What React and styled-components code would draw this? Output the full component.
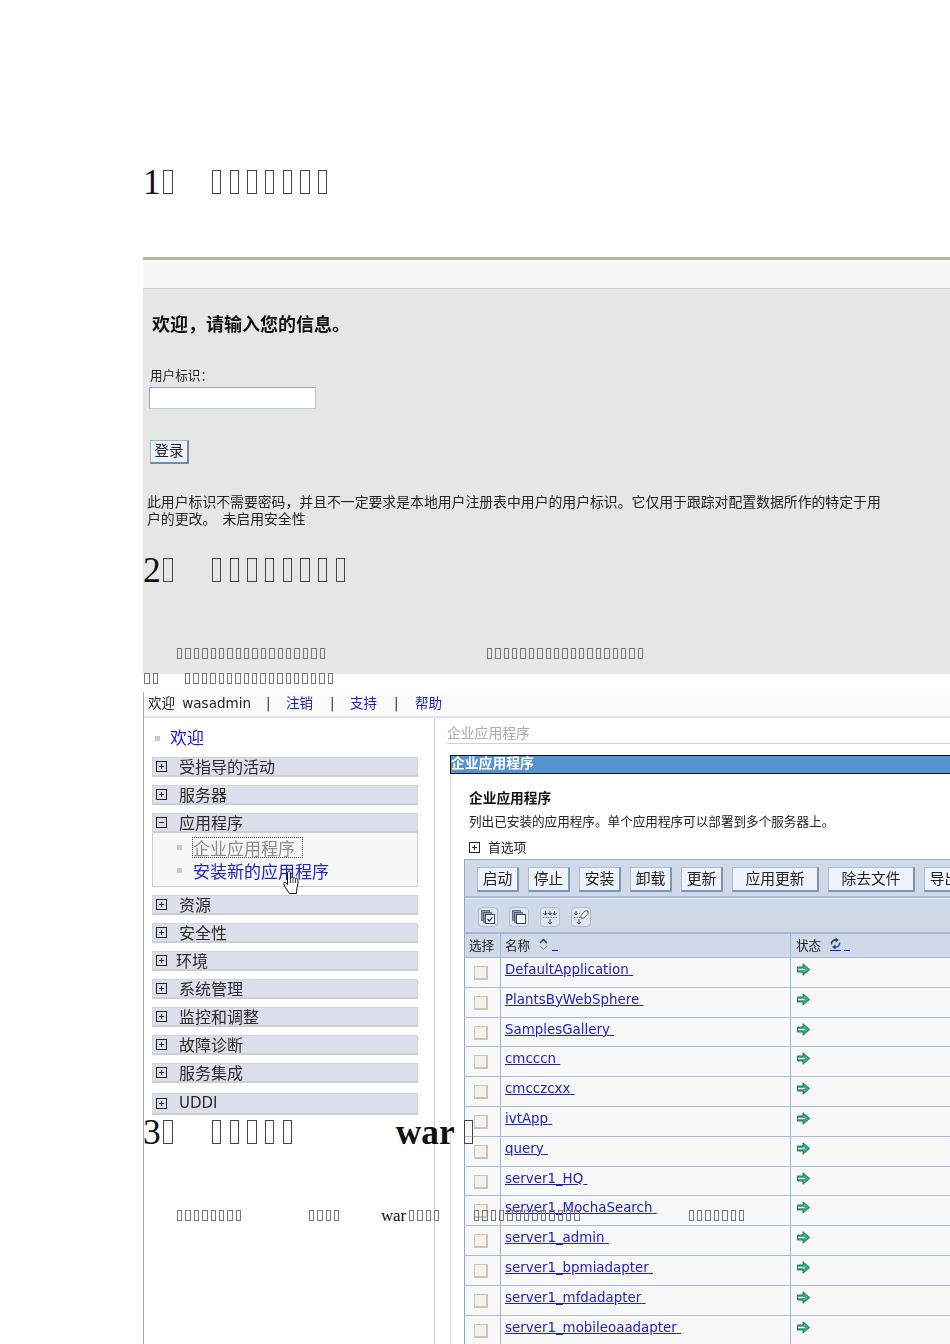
import React from 'react';
import styled, { createGlobalStyle } from 'styled-components';

const ui = `"DejaVu Sans", "Noto Sans CJK SC", sans-serif`;
const cjk = `"Noto Sans CJK SC", "Liberation Sans", sans-serif`;

const GlobalStyle = createGlobalStyle`
  html, body {
    margin: 0;
    padding: 0;
    background: #fff;
    overflow: hidden;
  }
`;

const Page = styled.div`
  position: relative;
  width: 950px;
  height: 1344px;
  overflow: hidden;
  padding: 162px 0 0 143px;
  box-sizing: border-box;
  font-family: "Liberation Serif", "Noto Sans CJK SC", serif;
  color: #111;
`;

/* missing glyph boxes, the document text has no font in the original */
const Box = styled.span`
  display: inline-block;
  box-sizing: border-box;
  width: ${p => (p.$big ? 0.27 : 0.32)}em;
  height: 0.68em;
  margin: 0 ${p => (p.$big ? 0.16 : 0.11)}em 0 0.07em;
  border: 1px solid ${p => (p.$big ? '#444' : '#777')};
`;

const Tofu = ({ n, big }) => (
  <>
    {Array.from({ length: n }, (_, i) => <Box key={i} $big={big} />)}
  </>
);

const Heading = styled.div`
  font-size: 35.4px;
  line-height: 40px;
  height: 40px;
  white-space: nowrap;
  margin-bottom: 55px;
`;

const FloatHeading = styled(Heading)`
  position: absolute;
  left: 143px;
  top: ${p => p.$top}px;
  margin: 0;
  z-index: 2;
`;

const Para = styled.div`
  position: absolute;
  left: 143px;
  top: ${p => p.$top}px;
  font-size: 16.8px;
  line-height: 20px;
  white-space: nowrap;
  z-index: 2;
`;

const Run = styled.span`
  margin-left: ${p => p.$gap}px;
`;

const War = styled.span`
  font-weight: ${p => (p.$bold ? 700 : 400)};
`;

/* login screenshot */
const LoginPanel = styled.section`
  height: 417px;
  box-sizing: border-box;
  border-top: 3px solid #b9b1a2;
  background: #e6e6e6;
  font-family: ${cjk};
  filter: blur(0.3px);
`;

const LoginBand = styled.div`
  height: 28px;
  background: #f7f7f7;
  border-bottom: 1px solid #cfcfcf;
`;

const LoginBody = styled.div`
  padding: 22px 0 0 7px;
  display: flex;
  flex-direction: column;
  align-items: flex-start;
`;

const Welcome = styled.h2`
  margin: 0 0 0 2px;
  font-size: 18px;
  line-height: 24px;
  font-weight: 700;
  color: #111;
`;

const FieldLabel = styled.label`
  margin-top: 31px;
  font-size: 12.6px;
  line-height: 18px;
  color: #222;
`;

const Input = styled.div`
  width: 167px;
  height: 22px;
  box-sizing: border-box;
  margin-top: 3px;
  margin-left: -1px;
  background: #fff;
  border: 1px solid #8aa7c6;
  border-bottom-color: #b8cade;
  border-right-color: #b8cade;
`;

const LoginButton = styled.div`
  width: 39px;
  height: 24px;
  box-sizing: border-box;
  margin-top: 31px;
  background: #eef3fb;
  border: 1px solid #9db3cc;
  border-right: 2px solid #6f8cae;
  border-bottom: 2px solid #6f8cae;
  font-size: 14.5px;
  line-height: 18px;
  text-align: center;
  color: #222;
`;

const Notice = styled.p`
  margin: 29px 0 0 -3px;
  width: 745px;
  font-size: 13.85px;
  line-height: 16.5px;
  color: #222;
`;

/* admin console screenshot */
const AdminPanel = styled.section`
  margin-top: 18px;
  height: 652px;
  border-left: 1px solid #b0aa9e;
  font-family: ${ui};
  filter: blur(0.3px);
`;

const TopBar = styled.div`
  height: 24px;
  box-sizing: content-box;
  background: #fbfbfb;
  border-bottom: 2px solid #e2e2e2;
  display: flex;
  align-items: flex-start;
  padding-left: 4px;
  font-size: 13.5px;
  line-height: 22px;
  color: #222;
  white-space: nowrap;
`;

const TopText = styled.span`
  margin-right: 15px;
  word-spacing: 3px;
`;

const TopLink = styled.a`
  color: #1a1ad0;
  width: 27px;
`;

const Divider = styled.span`
  width: ${p => p.$width || 20}px;
  margin-left: ${p => p.$left || 0}px;
  color: #333;
`;

const Columns = styled.div`
  display: grid;
  grid-template-columns: 291px 1fr;
  height: 626px;
`;

const Nav = styled.nav`
  border-right: 1px solid #cfcfcf;
  padding: 9px 16px 0 8px;
  display: flex;
  flex-direction: column;
  gap: 8px;
`;

const NavTop = styled.div`
  display: flex;
  align-items: flex-start;
  height: 22px;
  margin-left: 3px;
  font-size: 17px;
  line-height: 19px;
  color: #1a1ad0;
  font-family: ${cjk};
`;

const Bullet = styled.i`
  display: block;
  flex: none;
  width: 5px;
  height: 5px;
  background: #c8c8c8;
  margin-right: ${p => p.$gap}px;
  align-self: center;
`;

const TreeGroup = styled.div`
  display: flex;
  flex-direction: column;
`;

const TreeBar = styled.div`
  height: ${p => (p.$tall ? 22 : 20)}px;
  margin-top: ${p => (p.$tall ? 2 : 0)}px;
  box-sizing: border-box;
  background: #dcdfec;
  border: 1px solid #d2d2d6;
  border-bottom: 2px solid #cfcfcf;
  display: flex;
  align-items: center;
  padding: 0 0 1px 3px;
  font-size: 16px;
  line-height: 16px;
  font-family: ${cjk};
  color: #2a2a2a;
  white-space: nowrap;

  svg {
    flex: none;
    margin-right: ${p => p.$gap || 12}px;
  }
`;

const TreeLatin = styled.span`
  font-family: ${ui};
  font-size: 15px;
`;

const TreeBody = styled.div`
  height: 54px;
  box-sizing: border-box;
  background: #f7f7f7;
  border: 1px solid #cccccc;
  border-top: 0;
  padding: 4px 0 0 24px;
  font-family: ${cjk};
  font-size: 17px;
`;

const SubItem = styled.div`
  position: relative;
  display: flex;
  align-items: center;
  height: ${p => (p.$first ? 20 : 24)}px;
  padding-top: ${p => (p.$first ? 0 : 2)}px;
  box-sizing: border-box;
  color: ${p => (p.$first ? '#8c8c8c' : '#2222cc')};
`;

const Focused = styled.span`
  outline: 1px dotted #444;
  padding-right: 7px;
  line-height: 19px;
  white-space: nowrap;
`;

const HandCursor = styled.svg`
  position: absolute;
  left: 106px;
  top: 13px;
  z-index: 1;
`;

const Content = styled.main`
  padding: 4px 0 0 12px;
  overflow: hidden;
`;

const Crumb = styled.div`
  height: 22px;
  box-sizing: border-box;
  border-bottom: 1px solid #d2d2d2;
  font-size: 13.8px;
  line-height: 20px;
  color: #aaa;
  font-family: ${cjk};
`;

const Portlet = styled.div`
  margin: 11px 0 0 3px;
  height: 600px;
  border-left: 1px solid #dddddd;
`;

const PortletTitle = styled.div`
  height: 19px;
  box-sizing: border-box;
  margin-left: -1px;
  background: #5593d1;
  border: 1px solid #111;
  border-right: 0;
  color: #fff;
  font-family: ${cjk};
  font-weight: 700;
  font-size: 13.8px;
  line-height: 13px;
  white-space: nowrap;
`;

const PortletBody = styled.div`
  padding: 13px 0 0 13px;
  font-family: ${cjk};
`;

const PageTitle = styled.h3`
  margin: 0 0 0 5px;
  font-size: 13.7px;
  line-height: 20px;
  font-weight: 700;
  color: #111;
`;

const Intro = styled.p`
  margin: 5px 0 0 5px;
  font-size: 12.6px;
  line-height: 18px;
  color: #222;
  white-space: nowrap;
`;

const Prefs = styled.div`
  display: flex;
  align-items: center;
  gap: 8px;
  margin: 8px 0 0 5px;
  font-size: 12.8px;
  line-height: 18px;
  color: #222;
`;

const Table = styled.div`
  margin-top: 3px;
  width: 520px;
  border-top: 1px solid #8fa9cf;
  border-left: 1px solid #8fa9cf;
`;

const ToolRow = styled.div`
  display: flex;
  gap: 9px;
  height: 38px;
  box-sizing: border-box;
  padding: 7px 0 0 12px;
  background: #d0d9e8;
  border-bottom: 2px solid #a9bcd8;
`;

const ToolButton = styled.div`
  flex: none;
  width: ${p => (p.$wide ? 87 : 42)}px;
  height: 25px;
  box-sizing: border-box;
  background: #eef3fc;
  border: 1px solid #a8bdd8;
  border-right: 2px solid #7a97bb;
  border-bottom: 2px solid #7a97bb;
  font-size: 14.8px;
  line-height: 20px;
  text-align: center;
  color: #222;
`;

const IconRow = styled.div`
  display: flex;
  gap: 11px;
  height: 36px;
  box-sizing: border-box;
  padding: 8px 0 0 13px;
  background: #d0d9e8;
  border-top: 1px solid #e6ebf4;
  border-bottom: 2px solid #a2b7d6;
`;

const IconButton = styled.div`
  flex: none;
  width: 20px;
  height: 20px;
  box-sizing: border-box;
  display: flex;
  align-items: center;
  justify-content: center;
  background: #e0e6f1;
  border: 1px solid #afbdd2;
  border-radius: 4px;
`;

const Row = styled.div`
  display: grid;
  grid-template-columns: 36px 290px 1fr;
  height: ${p => (p.$head ? 24 : 29.8)}px;
  box-sizing: border-box;
  background: ${p => (p.$head ? '#d0d9e8' : '#f8f8f8')};
  border-bottom: 1px solid #a3b9d8;
`;

const Cell = styled.div`
  border-right: 1px solid #9fb6d6;
  display: flex;
  align-items: ${p => (p.$top ? 'flex-start' : 'center')};
  min-width: 0;
`;

const HeadCell = styled(Cell)`
  padding: 0 0 3px ${p => p.$pad}px;
  font-size: 12.6px;
  color: #222;
  gap: ${p => p.$gap || 4}px;
  white-space: nowrap;
`;

const StatusHeadCell = styled(HeadCell)`
  border-right: 0;
`;

const CheckCell = styled(Cell)`
  padding: 8px 0 0 9px;
  align-items: flex-start;
`;

const Check = styled.span`
  display: block;
  width: 14px;
  height: 14px;
  box-sizing: border-box;
  background: #f4f2ec;
  border: 1px solid #c9c5b9;
  border-right-width: 2px;
  border-bottom-width: 2px;
`;

const AppLink = styled.a`
  margin: 3px 0 0 4px;
  font-family: "DejaVu Sans", sans-serif;
  font-size: 13.4px;
  line-height: 18px;
  color: #2020c8;
  text-decoration: underline;
  white-space: pre;
`;

const StatusCell = styled(Cell)`
  padding: 5px 0 0 6px;
  border-right: 0;
`;

const HeadDash = styled.span`
  display: block;
  width: 6px;
  height: 12px;
  margin-left: ${p => p.$left || 0}px;
  border-bottom: 1px solid #1a1ad0;
`;

const PlusBox = () => (
  <svg width="11" height="11" viewBox="0 0 11 11">
    <rect x="0.5" y="0.5" width="10" height="10" fill="none" stroke="#222" />
    <path d="M3 5.500h5M5.500 3v5" stroke="#222" fill="none" />
  </svg>
);

const MinusBox = () => (
  <svg width="11" height="11" viewBox="0 0 11 11">
    <rect x="0.5" y="0.5" width="10" height="10" fill="none" stroke="#222" />
    <path d="M3 5.500h5" stroke="#222" fill="none" />
  </svg>
);

const Hand = () => (
  <HandCursor width="19" height="25" viewBox="0 0 19 25">
    <path
      d="M5 1.500c1-1 2.400-.5 2.500 1V8c.6-.9 2-.9 2.500.2.700-.9 2-.7 2.400.3.800-.7 2.100-.3 2.300 1 .5 3 .3 5.800-.8 8.500L13.500 23.500H6.500L2 17 .8 13.800c-.3-1.200 1-2 2-1.100L4.500 14.500V3c0-.6.100-1.100.5-1.500z"
      fill="#fff"
      stroke="#111"
      strokeWidth="1"
      strokeLinejoin="round"
    />
    <path d="M7.500 8v5M10 8.500v4.500M12.500 9v4" stroke="#111" strokeWidth="0.8" fill="none" />
  </HandCursor>
);

const StackCheck = () => (
  <svg width="16" height="16" viewBox="0 0 16 16">
    <path d="M1.500 1.500h8v2h-6v8h-2zM3.500 3.500h8v2h-6v8h-2z" fill="#8f9db3" stroke="#4d5a6e" strokeWidth="0.8" />
    <rect x="5.500" y="5.500" width="9" height="9" fill="#fff" stroke="#3d4a5e" />
    <path d="M7.500 10l1.800 2 3.200-4" fill="none" stroke="#222" strokeWidth="1.200" />
  </svg>
);

const StackEmpty = () => (
  <svg width="16" height="16" viewBox="0 0 16 16">
    <path d="M1.500 1.500h8v2h-6v8h-2zM3.500 3.500h8v2h-6v8h-2z" fill="#8f9db3" stroke="#4d5a6e" strokeWidth="0.8" />
    <rect x="5.500" y="5.500" width="9" height="9" fill="#fff" stroke="#3d4a5e" />
  </svg>
);

const ExpandRows = () => (
  <svg width="16" height="16" viewBox="0 0 16 16">
    <path d="M1 4.500h14M1 8.500h14" stroke="#7b889c" strokeDasharray="1.500 1" fill="none" />
    <path d="M3.500 2v4M2 4.500l1.500 1.500L5 4.500M8 2v4M6.500 4.500L8 6l1.500-1.500M12.500 2v4M11 4.500L12.500 6 14 4.500M8 10v5M6 13l2 2 2-2" stroke="#333" fill="none" strokeWidth="0.9" />
  </svg>
);

const EraseRows = () => (
  <svg width="16" height="16" viewBox="0 0 16 16">
    <path d="M1 4.500h6M1 8.500h6" stroke="#7b889c" strokeDasharray="1.500 1" fill="none" />
    <path d="M8 6.500l4-4.500h3v2.500l-4 4.500H8z" fill="#fff" stroke="#444" strokeWidth="0.9" />
    <path d="M3 2v4M1.500 4.500L3 6l1.500-1.500M6 10v5M4 13l2 2 2-2" stroke="#333" fill="none" strokeWidth="0.9" />
  </svg>
);

const SortIcon = () => (
  <svg width="9" height="13" viewBox="0 0 9 13">
    <path d="M1 5l3.500-3.500L8 5" fill="none" stroke="#1c3c68" strokeWidth="1.500" />
    <path d="M1 8l3.500 3.500L8 8" fill="none" stroke="#8a93a3" strokeWidth="1" />
  </svg>
);

const RefreshIcon = () => (
  <svg width="11" height="14" viewBox="0 0 11 14">
    <path d="M1.500 7.500a4 4 0 0 1 1.500-3.800 4 4 0 0 1 3-.7" fill="none" stroke="#25406f" strokeWidth="1.700" />
    <path d="M9.500 5.500a4 4 0 0 1-1.500 4 4 4 0 0 1-3 .6" fill="none" stroke="#2f62c0" strokeWidth="1.700" />
    <path d="M5.500 .5L9 3 5.500 5.500zM5.500 7.500L2 10l3.500 2.500z" fill="#25406f" />
    <path d="M0 13.500h11" stroke="#1a1ad0" />
  </svg>
);

const RunArrow = () => (
  <svg width="13" height="13" viewBox="0 0 13 13">
    <path d="M.5 4h5.500V.8L12.500 6.500 6 12.200V9H.5z" fill="#3bb078" stroke="#17685a" strokeWidth="0.9" strokeLinejoin="round" />
    <path d="M1 6.500h7" stroke="#e6fff2" strokeWidth="1.200" />
  </svg>
);

const treeTop = ['受指导的活动', '服务器'];
const treeBottom = [
  { label: '资源' },
  { label: '安全性' },
  { label: '环境', gap: 9 },
  { label: '系统管理' },
  { label: '监控和调整' },
  { label: '故障诊断' },
  { label: '服务集成' },
];
const tools = [
  { label: '启动' },
  { label: '停止' },
  { label: '安装' },
  { label: '卸载' },
  { label: '更新' },
  { label: '应用更新', wide: true },
  { label: '除去文件', wide: true },
  { label: '导出' },
];
const apps = [
  'DefaultApplication',
  'PlantsByWebSphere',
  'SamplesGallery',
  'cmcccn',
  'cmcczcxx',
  'ivtApp',
  'query',
  'server1_HQ',
  'server1_MochaSearch',
  'server1_admin',
  'server1_bpmiadapter',
  'server1_mfdadapter',
  'server1_mobileoaadapter',
];

export default function App() {
  return (
    <Page>
      <GlobalStyle />

      <Heading>
        1<Tofu n={1} big />
        <Run $gap={31}><Tofu n={7} big /></Run>
      </Heading>

      <LoginPanel>
        <LoginBand />
        <LoginBody>
          <Welcome>欢迎，请输入您的信息。</Welcome>
          <FieldLabel>用户标识：</FieldLabel>
          <Input />
          <LoginButton>登录</LoginButton>
          <Notice>
            此用户标识不需要密码，并且不一定要求是本地用户注册表中用户的用户标识。它仅用于跟踪对配置数据所作的特定于用户的更改。{'\u00a0 '}未启用安全性
          </Notice>
        </LoginBody>
      </LoginPanel>

      <AdminPanel>
        <TopBar>
          <TopText>欢迎 wasadmin</TopText>
          <Divider>|</Divider>
          <TopLink>注销</TopLink>
          <Divider $left={17}>|</Divider>
          <TopLink>支持</TopLink>
          <Divider $left={17} $width={21}>|</Divider>
          <TopLink>帮助</TopLink>
        </TopBar>
        <Columns>
          <Nav>
            <NavTop><Bullet $gap={10} />欢迎</NavTop>
            {treeTop.map(label => (
              <TreeBar key={label}><PlusBox />{label}</TreeBar>
            ))}
            <TreeGroup>
              <TreeBar><MinusBox />应用程序</TreeBar>
              <TreeBody>
                <SubItem $first>
                  <Bullet $gap={11} />
                  <Focused>企业应用程序</Focused>
                </SubItem>
                <SubItem>
                  <Bullet $gap={11} />
                  安装新的应用程序
                  <Hand />
                </SubItem>
              </TreeBody>
            </TreeGroup>
            {treeBottom.map(item => (
              <TreeBar key={item.label} $gap={item.gap}><PlusBox />{item.label}</TreeBar>
            ))}
            <TreeBar $tall><PlusBox /><TreeLatin>UDDI</TreeLatin></TreeBar>
          </Nav>
          <Content>
            <Crumb>企业应用程序</Crumb>
            <Portlet>
              <PortletTitle>企业应用程序</PortletTitle>
              <PortletBody>
                <PageTitle>企业应用程序</PageTitle>
                <Intro>列出已安装的应用程序。单个应用程序可以部署到多个服务器上。</Intro>
                <Prefs><PlusBox />首选项</Prefs>
                <Table>
                  <ToolRow>
                    {tools.map(t => (
                      <ToolButton key={t.label} $wide={t.wide}>{t.label}</ToolButton>
                    ))}
                  </ToolRow>
                  <IconRow>
                    <IconButton><StackCheck /></IconButton>
                    <IconButton><StackEmpty /></IconButton>
                    <IconButton><ExpandRows /></IconButton>
                    <IconButton><EraseRows /></IconButton>
                  </IconRow>
                  <Row $head>
                    <HeadCell $pad={4}>选择</HeadCell>
                    <HeadCell $pad={4} $gap={9}>
                      名称<SortIcon /><HeadDash $left={-5} />
                    </HeadCell>
                    <StatusHeadCell $pad={5} $gap={9}>
                      状态<RefreshIcon /><HeadDash $left={-6} />
                    </StatusHeadCell>
                  </Row>
                  {apps.map(name => (
                    <Row key={name}>
                      <CheckCell><Check /></CheckCell>
                      <Cell $top><AppLink>{name} </AppLink></Cell>
                      <StatusCell $top><RunArrow /></StatusCell>
                    </Row>
                  ))}
                </Table>
              </PortletBody>
            </Portlet>
          </Content>
        </Columns>
      </AdminPanel>

      <FloatHeading $top={550}>
        2<Tofu n={1} big />
        <Run $gap={31}><Tofu n={8} big /></Run>
      </FloatHeading>
      <Para $top={644}>
        <Run $gap={32.8}><Tofu n={18} /></Run>
        <Run $gap={158.8}><Tofu n={19} /></Run>
      </Para>
      <Para $top={669}>
        <Tofu n={2} />
        <Run $gap={24}><Tofu n={18} /></Run>
      </Para>
      <FloatHeading $top={1112}>
        3<Tofu n={1} big />
        <Run $gap={31}><Tofu n={5} big /></Run>
        <Run $gap={98}><War $bold>war</War></Run>
        <Run $gap={6.5}><Tofu n={1} big /></Run>
      </FloatHeading>
      <Para $top={1206}>
        <Run $gap={32.8}><Tofu n={8} /></Run>
        <Run $gap={64.8}><Tofu n={4} /></Run>
        <Run $gap={39.6}><War>war</War></Run>
        <Run $gap={1.6}><Tofu n={4} /></Run>
        <Run $gap={31.4}><Tofu n={13} /></Run>
        <Run $gap={105.8}><Tofu n={7} /></Run>
      </Para>
    </Page>
  );
}
